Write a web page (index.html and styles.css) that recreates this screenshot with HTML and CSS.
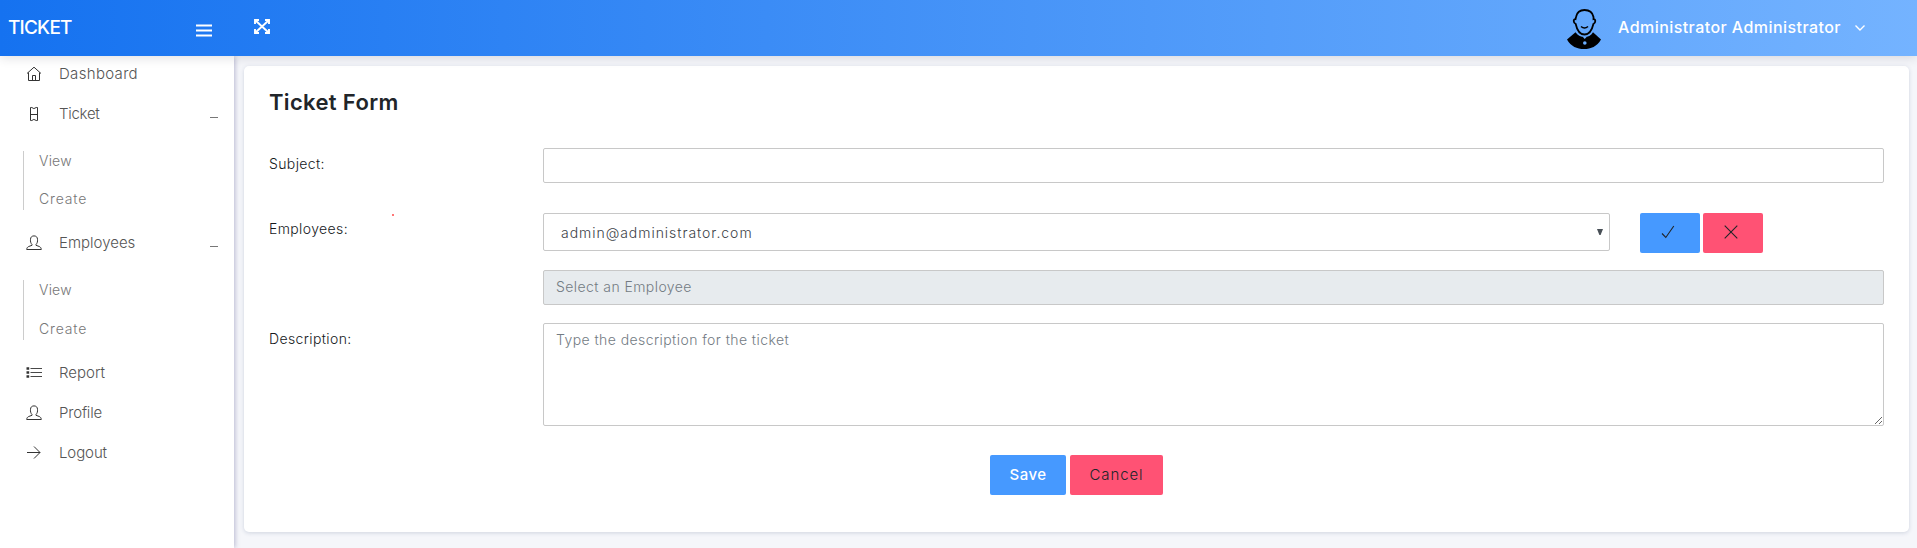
FILE: index.html
```
<!DOCTYPE html>
<html lang="en">
<head>
<meta charset="utf-8">
<title>Ticket Form</title>
<link rel="stylesheet" href="styles.css">
</head>
<body>
<svg class="defs" aria-hidden="true">
  <symbol id="user" viewBox="0 0 16 16"><path d="M6 10.300V9.500C4.700 8.200 4.300 6.500 4.500 4.300C4.600 2.100 5.900.9 8 .9s3.400 1.200 3.500 3.400C11.700 6.500 11.300 8.200 10 9.500V10.300l3.300 1.200c1.200.5 1.900 1.500 2 3H.7c.1-1.500.8-2.500 2-3z" fill="none" stroke="currentColor"/></symbol>
</svg>
<header class="topbar">
  <div class="brand">
    <span class="brand-name">TICKET</span>
    <svg class="menu-icon" width="16" height="13" viewBox="0 0 16 13"><path d="M0 1.500h16M0 6.500h16M0 11.500h16" stroke="#fff" stroke-width="2.200"/></svg>
  </div>
  <svg class="expand-icon" width="16" height="15" viewBox="0 0 16 15"><g fill="none" stroke="#fff" stroke-width="1.900"><path d="M1.500 1.500l13 12M14.500 1.500l-13 12"/><path d="M1 5V1H5M11 1h4V5M1 10v4H5M11 14h4V10" /></g></svg>
  <div class="account">
    <svg width="34" height="41" viewBox="0 0 34 41"><path d="M9 8C10 3 13 1 17.500 1S25.500 3 26.500 8v2.200c2.300-.3 2.500 3.800-.1 4.800C25 21 22 25.500 17.500 25.500S10 21 8.700 15C6 14 6.200 9.900 8.500 10.200z" fill="none" stroke="#000" stroke-width="1.800"/><path d="M14 17.500q3.500 3 7 0" fill="none" stroke="#000" stroke-width="1.600"/><path d="M0 30.500l8.500-7.300C11 26.500 14 28 17.500 28s6.500-1.500 8.500-4.800l8 7.300C30 37.500 24 40 17 40S4 37.500 0 30.500z" fill="#000"/><path d="M15.500 27.500h4.500l-2.300 2.500z" fill="#6aacfd"/><circle cx="17.800" cy="34" r="1.800" fill="#6aacfd"/></svg>
    <span class="account-name">Administrator Administrator</span>
    <svg width="12" height="8" viewBox="0 0 12 8"><path d="M1.500 1.500L6 6l4.500-4.500" fill="none" stroke="#fff" stroke-width="1.400"/></svg>
  </div>
</header>
<div class="body">
  <nav class="sidebar">
    <a class="item dashboard"><svg class="ico" viewBox="0 0 16 16"><path d="M1 7.500L8 1.200l7 6.300M2.500 6.500V14.500h11V6.500M6.500 14.500V9.500h3v5" fill="none" stroke="currentColor"/></svg><span class="w-dashboard">Dashboard</span></a>
    <a class="item"><svg class="ico" viewBox="0 0 16 16"><path d="M4.500 1.500h1.300q2 2.200 4.400 0h1.300v13h-1.300q-2.400-2.200-4.400 0H4.500zM4.500 8.500h7" fill="none" stroke="currentColor"/></svg><span class="w-ticket">Ticket</span><i class="dash"></i></a>
    <div class="sub"><a class="w-view">View</a><a class="w-create">Create</a></div>
    <a class="item"><svg class="ico"><use href="#user"/></svg><span>Employees</span><i class="dash"></i></a>
    <div class="sub last"><a class="w-view">View</a><a class="w-create">Create</a></div>
    <a class="item"><svg class="ico" viewBox="0 0 16 16"><path d="M4.500 3.500H16M4.500 7.500H16M4.500 11.500H16" stroke="currentColor" stroke-width=".9"/><path d="M.5 3.500h2.700M.5 7.500h2.700M.5 11.500h2.700" stroke="currentColor" stroke-width="2.400"/></svg><span>Report</span></a>
    <a class="item"><svg class="ico"><use href="#user"/></svg><span class="w-profile">Profile</span></a>
    <a class="item"><svg class="ico" viewBox="0 0 16 16"><path d="M1 7.500h13M8 1.500l6 6-6 6" fill="none" stroke="currentColor"/></svg><span class="w-logout">Logout</span></a>
  </nav>
  <main class="content">
    <form class="card">
      <h1 class="title">Ticket Form</h1>
      <div class="row subject">
        <label>Subject:</label>
        <input class="field" type="text">
      </div>
      <div class="row employees">
        <label>Employees:<span class="required-dot"></span></label>
        <div class="picker">
          <div class="field select"><span>admin@administrator.com</span><svg width="6" height="6" viewBox="0 0 6 6"><path d="M0 0h6L3.600 6H2.400z" fill="#495057"/></svg></div>
          <button class="btn add" type="button"><svg width="14" height="14" viewBox="0 0 14 14"><path d="M1 8.500l3.800 4L12.800 1" fill="none" stroke="#212529" stroke-width="1.100"/></svg></button>
          <button class="btn remove" type="button"><svg width="14" height="14" viewBox="0 0 14 14"><path d="M.7.7l12.600 12.600M13.300.7L.7 13.300" fill="none" stroke="#212529" stroke-width="1.100"/></svg></button>
        </div>
      </div>
      <div class="row chosen">
        <input class="field" type="text" placeholder="Select an Employee" disabled>
      </div>
      <div class="row">
        <label>Description:</label>
        <textarea class="field area" placeholder="Type the description for the ticket"></textarea>
      </div>
      <div class="actions">
        <button class="btn save" type="button">Save</button>
        <button class="btn cancel" type="button">Cancel</button>
      </div>
    </form>
  </main>
</div>
</body>
</html>
```
FILE: styles.css
```
* { box-sizing: border-box; }
body {
  margin: 0;
  height: 548px;
  overflow: hidden;
  display: flex;
  flex-direction: column;
  font: 300 14px/20px Inter, "Open Sans", sans-serif;
  color: #15181b;
  background: #f5f6fa;
}
.defs { display: none; }

.topbar {
  position: relative;
  z-index: 2;
  flex: none;
  height: 56px;
  display: flex;
  align-items: center;
  color: #fff;
  background: linear-gradient(to right, #1572f0, #74b3ff);
  box-shadow: 0 2px 10px rgba(40, 40, 60, .14);
}
.brand { width: 234px; padding: 0 22px 0 8px; display: flex; align-items: center; justify-content: space-between; }
.brand-name { font-size: 19px; font-weight: 500; letter-spacing: -.8px; }
.menu-icon { margin-top: 4px; }
.expand-icon { margin: 0 0 4px 20px; }
.account { margin-left: auto; padding-right: 51px; display: flex; align-items: center; }
.account svg:first-child { margin: 3px 17px 0 0; }
.account-name { font-size: 16px; font-weight: 500; letter-spacing: .44px; margin: 0 13px 2px 0; }

.body { flex: 1; display: flex; min-height: 0; }
.sidebar {
  flex: none;
  width: 234px;
  background: #fff;
  box-shadow: 1px 0 5px rgba(70, 70, 130, .35);
}
.item {
  height: 40px;
  padding: 0 16px 0 26px;
  display: flex;
  align-items: center;
  font-size: 15px;
  color: #555;
}
.item.dashboard { height: 38px; padding-bottom: 2px; }
.ico { width: 16px; height: 16px; margin-right: 17px; color: #333; }
.dash { width: 8px; height: 1px; margin: 7px 0 0 auto; background: #777; }
.sub {
  height: 59px;
  margin: 17px 0 13px 23px;
  padding-left: 15px;
  border-left: 1px solid #ccc;
  display: flex;
  flex-direction: column;
  gap: 18px;
  color: #777;
}
.sub.last { height: 60px; gap: 19px; }
.w-dashboard { letter-spacing: .32px; }
.w-ticket { letter-spacing: -.28px; }
.w-view { letter-spacing: .2px; }
.w-create { letter-spacing: .85px; }
.w-profile { letter-spacing: -.19px; }
.w-logout { letter-spacing: -.1px; }

.content { flex: 1; padding: 10px 8px 16px 10px; }
.card {
  height: 466px;
  padding: 23px 25px 0;
  background: #fff;
  border-radius: 5px;
  box-shadow: 0 1px 4px rgba(60, 80, 120, .2);
}
.title { margin: 0 0 33px; font-size: 22px; line-height: 26px; font-weight: 600; letter-spacing: .34px; color: #212529; }
.row { display: grid; grid-template-columns: 274px 1fr; align-items: start; }
.row label { position: relative; padding-top: 6px; letter-spacing: .38px; }
.subject { margin-bottom: 30px; }
.employees { margin-bottom: 17px; }
.chosen { margin-bottom: 18px; }
.chosen .field { grid-column: 2; padding-bottom: 2px; }
.field {
  display: block;
  width: 100%;
  height: 35px;
  margin: 0;
  padding: 0 12px;
  border: 1px solid #c8c8c8;
  border-radius: 2px;
  background: #fff;
  color: #3c4248;
  font: 300 14px/20px Inter, "Open Sans", sans-serif;
  letter-spacing: .43px;
}
.field:disabled { background: #e7ebee; }
.field::placeholder { color: #737b83; opacity: 1; }
.area { height: 103px; padding-top: 6px; resize: vertical; }
.picker { display: flex; }
.select {
  width: 1067px;
  height: 38px;
  margin-right: 30px;
  padding: 0 6px 0 17px;
  display: flex;
  align-items: center;
  justify-content: space-between;
  letter-spacing: .96px;
}
.select span { padding-top: 2px; }
.required-dot { position: absolute; left: 123px; top: 1px; width: 2px; height: 2px; background: #ff4a4a; border-radius: 1px; }
.btn {
  height: 40px;
  padding: 0;
  border: 0;
  border-radius: 2px;
  color: #212529;
  font: 300 15px/20px Inter, "Open Sans", sans-serif;
}
.add, .remove { width: 60px; }
.add { background: #4699ff; margin-right: 3px; }
.remove { background: #ff5274; }
.add svg, .remove svg { display: block; margin: -3px 0 0 21px; }
.actions { margin-top: 29px; display: flex; justify-content: center; gap: 4px; }
.save { width: 76px; background: #4699ff; color: #fff; font-weight: 500; letter-spacing: .5px; }
.cancel { width: 93px; background: #ff5274; letter-spacing: .9px; }
```
